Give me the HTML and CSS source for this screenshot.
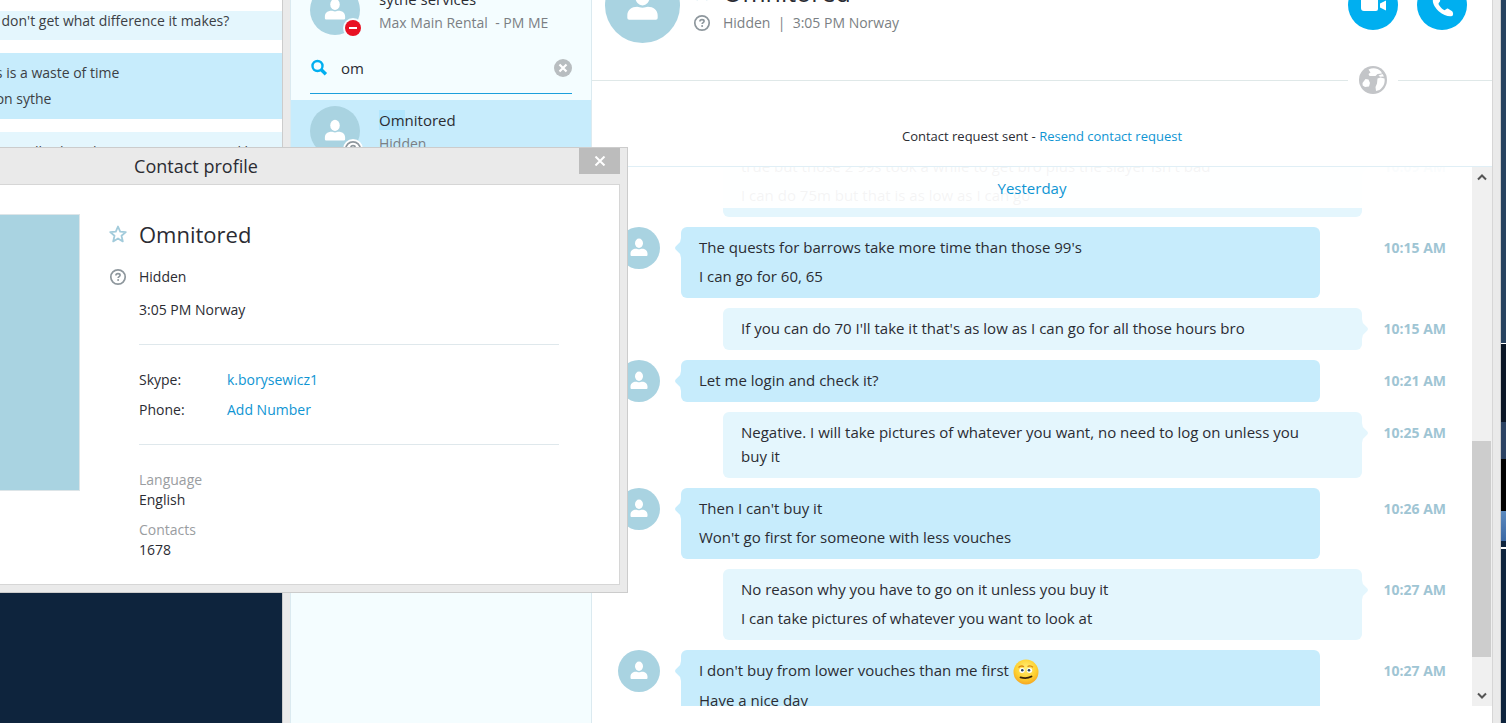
FILE: index.html
```
<!DOCTYPE html>
<html lang="en">
<head>
  <meta charset="UTF-8" />
  <meta name="viewport" content="width=device-width, initial-scale=1.0"/>
  <title>Omnitored - Chat</title>
  <link rel="stylesheet" href="styles.css">
</head>
<body>

  <!-- Shared icons -->
  <svg class="sprite" aria-hidden="true">
    <symbol id="person" viewBox="0 0 42 42">
      <ellipse cx="21" cy="16.300" rx="4" ry="4.700"/>
      <path d="M12.500 28v-1.500c0-3 2.500-4.800 5.500-4.800 1 0 1.600.5 3 .5s2-.5 3-.5c3 0 5.500 1.800 5.500 4.800V28q0 1-1 1h-15q-1 0-1-1z"/>
    </symbol>
    <symbol id="question" viewBox="0 0 18 18">
      <circle cx="9" cy="9" r="7.200" fill="none" stroke="currentColor" stroke-width="1.700"/>
      <path d="M6.900 7.400c0-1.200.9-1.800 2.100-1.800s2.100.6 2.100 1.600c0 1.400-2 1.300-2 2.900" fill="none" stroke="currentColor" stroke-width="1.600"/>
      <circle cx="9.100" cy="12.100" r="1" fill="currentColor"/>
    </symbol>
    <symbol id="star" viewBox="0 0 18 18">
      <path d="M9 1.500l2.200 5.100 5.600.5-4.300 3.700 1.300 5.600L9 13.400l-4.800 3 1.300-5.600L1.200 7.100l5.600-.5z" fill="none" stroke="currentColor" stroke-width="1.800" stroke-linejoin="round"/>
    </symbol>
  </svg>

  <!-- Older chat window at the back -->
  <section class="window back-window">
    <div class="old-msg out"><p>I don't get what difference it makes?</p></div>
    <div class="old-msg in"><p>This is a waste of time</p><p>go on sythe</p></div>
    <div class="old-msg out"><p>basically i bought two times your total but not</p></div>
  </section>

  <!-- Main window -->
  <main class="window main-window">
    <aside class="sidebar">
      <div class="contact">
        <div class="avatar">
          <svg class="face"><use href="#person"/></svg>
          <svg class="badge" viewBox="0 0 20 20"><circle cx="10" cy="10" r="10" fill="#f4fdff"/><circle cx="10" cy="10" r="8" fill="#e81123"/><path d="M6 9h8v2H6z" fill="#fff"/></svg>
        </div>
        <div>
          <div class="contact-name">sythe services</div>
          <div class="contact-status">Max Main Rental &nbsp;- PM ME</div>
        </div>
      </div>

      <form class="search">
        <label for="search" aria-label="Search contacts">
          <svg class="search-icon" viewBox="0 0 18 18"><circle cx="7.500" cy="7" r="5" fill="none" stroke="#00aff0" stroke-width="2.400"/><path d="M11.300 10.800l4.600 4.400" stroke="#00aff0" stroke-width="3.400"/></svg>
        </label>
        <input type="text" id="search" value="om">
        <button type="reset" class="clear-btn" aria-label="Clear">
          <svg viewBox="0 0 18 18"><circle cx="9" cy="9" r="9" fill="#b8bdc0"/><path d="M5.500 5.500l7 7m0-7l-7 7" stroke="#fff" stroke-width="2.200"/></svg>
        </button>
      </form>

      <div class="contact active">
        <div class="avatar">
          <svg class="face"><use href="#person"/></svg>
          <svg class="badge hidden-badge" viewBox="0 0 20 20"><circle cx="10" cy="10" r="10" fill="#fff"/><use href="#question" x="1" y="1" width="18" height="18"/></svg>
        </div>
        <div>
          <div class="contact-name"><mark>Om</mark>nitored</div>
          <div class="contact-status">Hidden</div>
        </div>
      </div>
    </aside>

    <section class="chat">
      <header class="chat-header">
        <div class="avatar large"><svg class="face"><use href="#person"/></svg></div>
        <div class="chat-info">
          <div class="line">
            <svg class="icon star"><use href="#star"/></svg>
            <h1>Omnitored</h1>
          </div>
          <div class="line status">
            <svg class="icon"><use href="#question"/></svg>
            <span>Hidden &nbsp;|&nbsp; 3:05 PM Norway</span>
          </div>
        </div>
        <div class="call-btns">
          <button aria-label="Video call">
            <svg viewBox="0 0 50 50"><path d="M16 16h11q3 0 3 3v10q0 2-2 2H16q-3 0-3-3v-9q0-3 3-3zM32 23.500l6-3v10l-6-3z" fill="#fff"/></svg>
          </button>
          <button aria-label="Call">
            <svg viewBox="0 0 50 50"><path d="M16 19c-1 4 2 9 6 12.500s10 5.500 13 4.500c1.500-.8 1.500-4-.2-5l-3.600-2.200c-1.500-.8-2.200 1.400-3.700 1.400-2-.8-5.500-4.200-6-6.500 0-1.500 2.300-2 1.500-3.700L21 16.500c-1.500-1.900-4.400 0-5 2.500z" fill="#fff"/></svg>
          </button>
        </div>
      </header>

      <div class="divider">
        <svg class="globe" viewBox="0 0 28 28">
          <circle cx="14" cy="14" r="14" fill="#c3c5c8"/>
          <path d="M9.500 3.500c4.500-2 9-1.500 12.500 2l1 2-4.500.5-2 2h-6l-1-2 2-1.500z" fill="#fff"/>
          <path d="M3.500 17l3-4 3 .5 1.500 3.500-1 3.500-4 .5-2.300-1.500z" fill="#fff"/>
          <path d="M18.500 12.500l3-1 4 1c.8 5-1.500 9-5 11.500l-3.500 1-.5-4 1.500-3.500z" fill="#fff"/>
          <path d="M19.500 9.500l4-1.500 1.500 2.500-4 .3z" fill="#fff"/>
        </svg>
      </div>

      <div class="request">Contact request sent - <a href="#">Resend contact request</a></div>

      <div class="history">
        <div class="messages">
          <div class="day">Yesterday</div>

          <div class="msg out">
            <div class="bubble">
              <p>true but those 2 99s took a while to get bro plus the slayer isn't bad</p>
              <p>I can do 75m but that is as low as I can go</p>
            </div>
            <time>10:09 AM</time>
          </div>
          <div class="msg in">
            <div class="avatar small"><svg class="face"><use href="#person"/></svg></div>
            <div class="bubble">
              <p>The quests for barrows take more time than those 99's</p>
              <p>I can go for 60, 65</p>
            </div>
            <time>10:15 AM</time>
          </div>
          <div class="msg out">
            <div class="bubble">
              <p>If you can do 70 I'll take it that's as low as I can go for all those hours bro</p>
            </div>
            <time>10:15 AM</time>
          </div>
          <div class="msg in">
            <div class="avatar small"><svg class="face"><use href="#person"/></svg></div>
            <div class="bubble">
              <p>Let me login and check it?</p>
            </div>
            <time>10:21 AM</time>
          </div>
          <div class="msg out">
            <div class="bubble">
              <p>Negative. I will take pictures of whatever you want, no need to log on unless you buy it</p>
            </div>
            <time>10:25 AM</time>
          </div>
          <div class="msg in">
            <div class="avatar small"><svg class="face"><use href="#person"/></svg></div>
            <div class="bubble">
              <p>Then I can't buy it</p>
              <p>Won't go first for someone with less vouches</p>
            </div>
            <time>10:26 AM</time>
          </div>
          <div class="msg out">
            <div class="bubble">
              <p>No reason why you have to go on it unless you buy it</p>
              <p>I can take pictures of whatever you want to look at</p>
            </div>
            <time>10:27 AM</time>
          </div>
          <div class="msg in">
            <div class="avatar small"><svg class="face"><use href="#person"/></svg></div>
            <div class="bubble">
              <p>I don't buy from lower vouches than me first
                <svg class="emoji" viewBox="0 0 26 26" role="img" aria-label="smirk">
                  <defs><radialGradient id="skin" cx=".5" cy=".35" r=".65"><stop offset="0" stop-color="#fff07a"/><stop offset=".65" stop-color="#fed02f"/><stop offset="1" stop-color="#f5a623"/></radialGradient></defs>
                  <circle cx="13" cy="13" r="12.500" fill="url(#skin)"/>
                  <path d="M5.500 8.500q2.500-2.500 5.500-.8M14.500 7.500q3-1.500 5.500.8" fill="none" stroke="#d98a12" stroke-width="1.300"/>
                  <ellipse cx="9" cy="11.500" rx="2.700" ry="2.400" fill="#fff"/><ellipse cx="16.500" cy="11.500" rx="2.700" ry="2.400" fill="#fff"/>
                  <circle cx="9.300" cy="11.300" r="1.300" fill="#26425c"/><circle cx="16" cy="11.300" r="1.300" fill="#26425c"/>
                  <path d="M7.500 18.300q6 1.800 11-.8" fill="none" stroke="#3b2408" stroke-width="1.800" stroke-linecap="round"/>
                </svg>
              </p>
              <p>Have a nice day</p>
            </div>
            <time>10:27 AM</time>
          </div>
        </div>

        <div class="scrollbar">
          <button aria-label="Scroll up"><svg viewBox="0 0 10 8"><path d="M1 6.500l4-4 4 4" /></svg></button>
          <div class="track"><div class="thumb"></div></div>
          <button aria-label="Scroll down"><svg viewBox="0 0 10 8"><path d="M1 1.500l4 4 4-4" /></svg></button>
        </div>
      </div>
    </section>
  </main>

  <!-- Contact profile dialog -->
  <section class="window dialog" role="dialog" aria-labelledby="dialogTitle">
    <header class="title-bar">
      <h2 id="dialogTitle">Contact profile</h2>
      <button class="close-btn" aria-label="Close"><svg viewBox="0 0 12 10"><path d="M1.500.5l9 9m0-9l-9 9" stroke="#fff" stroke-width="2"/></svg></button>
    </header>
    <div class="dialog-body">
      <div class="picture"></div>
      <div class="profile">
        <div class="line">
          <svg class="icon star"><use href="#star"/></svg>
          <h3>Omnitored</h3>
        </div>
        <div class="line hidden-line">
          <svg class="icon"><use href="#question"/></svg>
          <span>Hidden</span>
        </div>
        <div class="details">
          <div class="local-time">3:05 PM Norway</div>
          <dl class="pairs">
            <dt>Skype:</dt><dd><a href="#">k.borysewicz1</a></dd>
            <dt>Phone:</dt><dd><a href="#">Add Number</a></dd>
          </dl>
          <dl class="facts">
            <dt>Language</dt><dd>English</dd>
            <dt>Contacts</dt><dd>1678</dd>
          </dl>
        </div>
      </div>
    </div>
  </section>

</body>
</html>
```
FILE: styles.css
```
* {
  box-sizing: border-box;
}
body {
  margin: 0;
  height: 100vh;
  overflow: hidden;
  position: relative;
  font-family: "Open Sans", "Noto Sans", sans-serif;
  font-size: 14px;
  line-height: 24px;
  color: #2b2c33;
  background: linear-gradient(#27425f 343px, #fff 343px 344px, #0b1626 344px 422px, #2b4263 422px 459px, #000 459px 511px, #5c8abf 511px, #3a68a4 541px, #0e243d 541px 547px, #fff 547px 549px, #0e243d 549px);
}
p, h1, h2, h3, dl, dd {
  margin: 0;
}
h1, h2, h3 {
  font-weight: 400;
}
a {
  color: #0f95d3;
  text-decoration: none;
}
button {
  padding: 0;
  border: none;
  cursor: pointer;
}
svg {
  display: block;
}
.sprite {
  position: absolute;
  width: 0;
  height: 0;
}
.window {
  position: absolute;
}

/* Back window */
.back-window {
  left: -60px;
  top: 0;
  bottom: 0;
  width: 342px;
  display: flex;
  flex-direction: column;
  gap: 13px;
  padding-top: 11px;
  background: linear-gradient(#fff 400px, #0e243d 400px);
  line-height: 26px;
  color: #3c3f45;
}
.old-msg {
  padding: 7px 0 7px 54px;
  background: #e4f6fd;
}
.old-msg:first-child {
  padding-top: 0;
  padding-bottom: 10px;
  line-height: 19px;
}
.old-msg.in {
  padding-left: 36px;
  background: #c7ecfc;
}

/* Main window */
.main-window {
  left: 282px;
  right: 5px;
  top: 0;
  bottom: 0;
  display: flex;
  padding: 0 7px;
  background: #eaeaea;
  border: solid #ccc;
  border-width: 0 1px;
}
.sidebar {
  width: 302px;
  flex-shrink: 0;
  background: #f4fdff;
  border: solid #dbeaf0;
  border-width: 0 1px;
}
.contact {
  display: flex;
  gap: 19px;
  height: 62px;
  padding: 6px 19px;
}
.contact:first-child {
  margin-top: -21px;
}
.contact.active {
  background: #c7ecfc;
}
.contact-name {
  padding-top: 2px;
  font-size: 15px;
}
.contact-status {
  line-height: 24px;
  color: #7b7f84;
}
mark {
  color: inherit;
  background: #b2e6fd;
}
.avatar {
  position: relative;
  width: 50px;
  height: 50px;
  flex-shrink: 0;
  border-radius: 50%;
  background: #a9d3e1;
}
.avatar.large {
  width: 75px;
  height: 75px;
}
.avatar.small {
  width: 42px;
  height: 42px;
}
.face {
  width: 100%;
  height: 100%;
  fill: #fff;
}
.badge {
  position: absolute;
  right: -3px;
  bottom: -3px;
  width: 20px;
  height: 20px;
}
.hidden-badge {
  color: #8e979d;
}
.search {
  display: flex;
  align-items: center;
  height: 53px;
  margin: 0 19px 6px;
  padding-top: 2px;
  border-bottom: 1px solid #1b9fdc;
}
.search-icon {
  width: 18px;
  height: 18px;
}
.search input {
  flex: 1;
  min-width: 0;
  padding: 0 13px;
  border: none;
  outline: none;
  background: none;
  font: inherit;
  font-size: 15px;
  color: inherit;
}
.clear-btn {
  background: none;
}
.clear-btn svg {
  width: 18px;
  height: 18px;
}

/* Chat */
.chat {
  flex: 1;
  min-width: 0;
  display: flex;
  flex-direction: column;
  background: #fff;
  border-right: 1px solid #d6d6d6;
}
.chat-header {
  display: flex;
  gap: 13px;
  margin-top: -32px;
  padding: 0 25px 23px 13px;
}
.chat-info {
  flex: 1;
  padding-top: 8px;
}
.line {
  display: flex;
  align-items: center;
  gap: 12px;
}
.icon {
  width: 18px;
  height: 18px;
  color: #8e979d;
}
.icon.star {
  color: #a2cbdb;
}
.chat-info h1 {
  font-size: 25px;
  line-height: 32px;
}
.status {
  padding-top: 3px;
  color: #7b7f84;
}
.call-btns {
  display: flex;
  gap: 19px;
  padding-top: 12px;
}
.call-btns button {
  width: 50px;
  height: 50px;
  border-radius: 50%;
  background: #00aff0;
}
.divider {
  display: flex;
}
.divider::before, .divider::after {
  content: "";
  flex: 1;
  height: 14px;
  border-bottom: 1px solid #dfe8e8;
}
.divider::after {
  flex: 0 0 94px;
}
.globe {
  width: 28px;
  height: 28px;
  margin: 0 11px;
}
.request {
  padding: 30px 0 18px;
  border-bottom: 1px solid #e0eff6;
  font-size: 13px;
  text-align: center;
}
.history {
  position: relative;
  z-index: 0;
  flex: 1;
  min-height: 0;
  display: flex;
  margin-bottom: 17px;
  font-size: 15px;
}
.messages {
  flex: 1;
  display: flex;
  flex-direction: column;
  gap: 10px;
  overflow: hidden;
  padding: 0 26px;
}
.day {
  position: absolute;
  left: 0;
  right: 20px;
  top: 0;
  z-index: 1;
  padding: 9px 0 8px;
  background: rgba(255, 255, 255, 0.95);
  color: #0f95d3;
  text-align: center;
}
.msg {
  flex-shrink: 0;
  display: grid;
  grid-template-columns: 42px 1fr 63px;
  gap: 21px;
}
.day + .msg {
  margin-top: -21px;
}
.bubble {
  position: relative;
  grid-column: 2;
  display: flex;
  flex-direction: column;
  gap: 5px;
  padding: 8px 36px 10px 18px;
  border-radius: 6px;
}
.in .bubble {
  margin-right: 42px;
  background: #c7ecfc;
}
.out .bubble {
  margin-left: 42px;
  background: #e4f6fd;
}
.bubble::before {
  content: "";
  position: absolute;
  top: 11px;
  width: 6px;
  height: 20px;
  background: inherit;
}
.in .bubble::before {
  right: 100%;
  clip-path: polygon(100% 0, 85% 20%, 10% 43%, 0 50%, 10% 57%, 85% 80%, 100% 100%);
}
.out .bubble::before {
  left: 100%;
  clip-path: polygon(0 0, 15% 20%, 90% 43%, 100% 50%, 90% 57%, 15% 80%, 0 100%);
}
.msg time {
  grid-column: 3;
  padding-top: 9px;
  font-size: 14px;
  font-weight: 700;
  text-align: right;
  white-space: nowrap;
  color: #9fc5d4;
}
.emoji {
  display: inline-block;
  width: 26px;
  height: 26px;
  margin: -2px 0;
  vertical-align: middle;
}
.scrollbar {
  width: 20px;
  display: flex;
  flex-direction: column;
  background: #f0f0f0;
}
.scrollbar button {
  display: flex;
  align-items: center;
  justify-content: center;
  height: 20px;
  background: none;
}
.scrollbar svg {
  width: 10px;
  height: 8px;
  fill: none;
  stroke: #555;
  stroke-width: 2;
}
.track {
  flex: 1;
  display: flex;
  flex-direction: column;
}
.track::before, .track::after {
  content: "";
  flex: 254;
}
.track::after {
  flex: 29;
}
.thumb {
  flex: 216;
  margin-right: 1px;
  background: #cdcdcd;
}

/* Contact profile */
.dialog {
  left: -236px;
  top: 147px;
  width: 864px;
  padding: 0 7px 7px;
  background: #eaeaea;
  border: 1px solid #ccc;
}
.title-bar {
  position: relative;
  height: 36px;
  text-align: center;
}
.title-bar h2 {
  font-size: 18px;
  line-height: 36px;
}
.close-btn {
  position: absolute;
  top: 0;
  right: 0;
  width: 41px;
  height: 26px;
  background: #bcbcbc;
}
.close-btn svg {
  width: 12px;
  height: 10px;
  margin: 0 auto;
}
.dialog-body {
  display: flex;
  gap: 29px;
  padding: 29px 60px 14px 30px;
  background: #fff;
  border: 1px solid #d6d6d6;
}
.picture {
  width: 277px;
  height: 277px;
  background: #a9d3e1;
  border: 1px solid #dde5e8;
}
.profile {
  flex: 1;
  line-height: 30px;
}
.profile h3 {
  font-size: 22px;
  line-height: 40px;
}
.hidden-line {
  padding-top: 8px;
}
.details {
  padding-left: 30px;
}
.local-time {
  padding: 3px 0 19px;
}
.pairs {
  display: grid;
  grid-template-columns: 88px 1fr;
  padding: 20px 0 19px;
  border: solid #dfe8ec;
  border-width: 1px 0;
}
.facts {
  padding-top: 25px;
  line-height: 20px;
}
.facts dt {
  color: #9a9da1;
}
.facts dd {
  margin-bottom: 10px;
}
```
